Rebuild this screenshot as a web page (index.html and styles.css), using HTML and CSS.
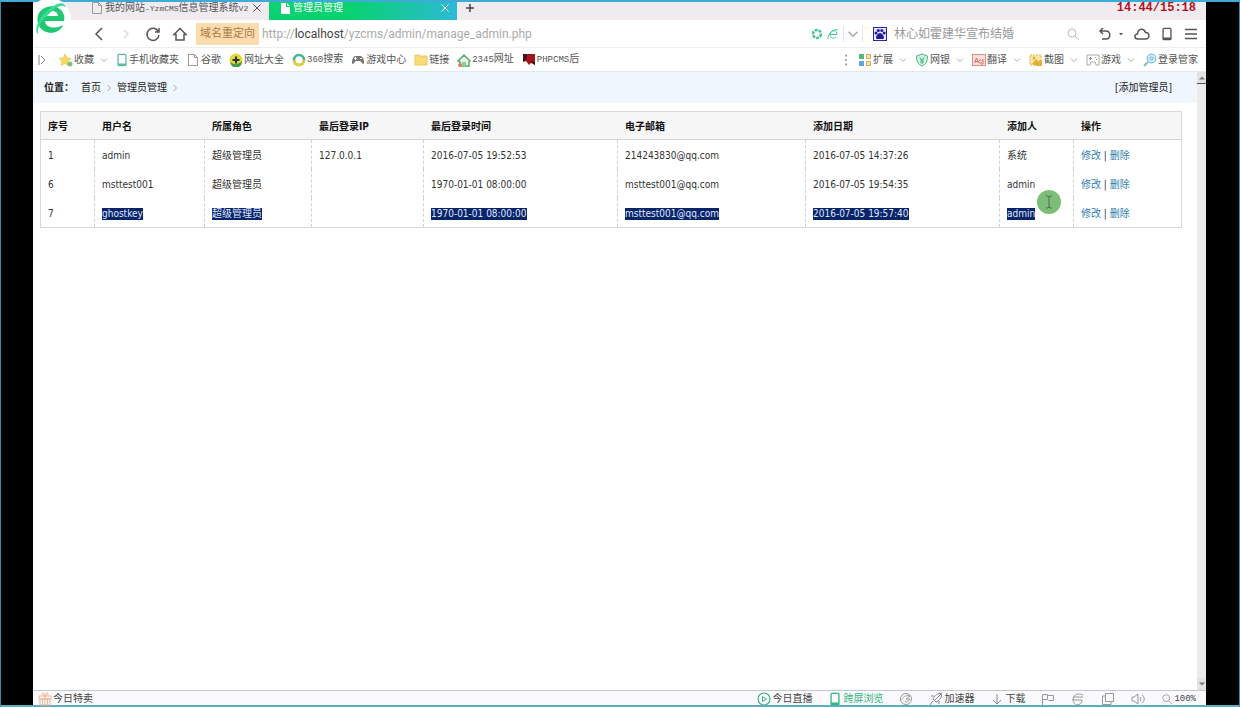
FILE: index.html
```html
<!DOCTYPE html>
<html lang="zh-CN">
<head>
<meta charset="utf-8">
<title>管理员管理</title>
<link rel="stylesheet" href="styles.css">
</head>
<body>
<svg class="sprite" aria-hidden="true">
  <symbol id="page" viewBox="0 0 12 14"><path d="M1.5 1.5h6l3 3v8h-9zM7.5 1.5v3h3" fill="none" stroke="currentColor"/></symbol>
  <symbol id="down" viewBox="0 0 8 8"><path d="M1 2.5l3 3 3-3" fill="none" stroke="currentColor"/></symbol>
  <symbol id="next" viewBox="0 0 8 8"><path d="M2.5 1l3 3-3 3" fill="none" stroke="currentColor"/></symbol>
  <symbol id="close" viewBox="0 0 10 10"><path d="M1.5 1.5l7 7M8.5 1.5l-7 7" fill="none" stroke="currentColor"/></symbol>
  <symbol id="search" viewBox="0 0 14 14"><circle cx="6" cy="6" r="4" fill="none" stroke="currentColor"/><path d="M9 9l4 4" stroke="currentColor"/></symbol>
  <symbol id="phone" viewBox="0 0 12 16"><rect x="1.5" y="1.5" width="9" height="13" rx="1" fill="none" stroke="currentColor" stroke-width="1.5"/><path d="M1.5 12h9v2h-9z" fill="currentColor"/></symbol>
</svg>

<div class="window">
  <header class="chrome">
    <svg class="logo" viewBox="0 0 38 46" aria-label="浏览器">
      <circle cx="17" cy="23" r="21" fill="#fff"/>
      <path d="M31 25H12c0 6 9 9 18 4-2 7-12 10-19 6C4 31 3 22 6 17 11 9 23 8 28 14c3 3 4 7 3 11zM12 20h13c0-6-11-7-13 0z" fill="#20c873" fill-rule="evenodd"/>
      <path d="M5 38C1 36 4 23 16 13 23 7 32 4 33 12c-3-5-10-1-17 6C8 25 4 31 5 38z" fill="#35dc91"/>
    </svg>

    <nav class="tabs">
      <button class="tab"><svg class="i12 gray"><use href="#page"/></svg><span class="tab-title">我的网站<span class="mono small">-YzmCMS</span>信息管理系统<span class="mono small">V2</span></span><svg class="i10"><use href="#close"/></svg></button>
      <button class="tab active"><svg class="i12" viewBox="0 0 12 14"><path d="M2 2h5v4h4v7H2z" fill="#fff"/><path d="M8 2l3 3H8z" fill="#fff"/></svg><span class="tab-title">管理员管理</span><svg class="i10"><use href="#close"/></svg></button>
      <button class="add" aria-label="新标签"><svg class="i10" viewBox="0 0 10 10"><path d="M5 1v8M1 5h8" stroke="#444" stroke-width="1.5"/></svg></button>
      <time class="clock">14:44/15:18</time>
    </nav>

    <div class="address">
      <div class="nav-buttons">
        <button aria-label="后退"><svg class="i16" viewBox="0 0 16 16"><path d="M11 2L5 8l6 6" fill="none" stroke="#555" stroke-width="1.5"/></svg></button>
        <button aria-label="前进"><svg class="i16" viewBox="0 0 16 16"><path d="M6 4l4 4-4 4" fill="none" stroke="#ddd" stroke-width="1.5"/></svg></button>
        <button aria-label="刷新"><svg class="i16" viewBox="0 0 16 16"><path d="M13 5A6 6 0 1 0 14 9M14 2v4h-4" fill="none" stroke="#555" stroke-width="1.5"/></svg></button>
        <button aria-label="主页"><svg class="i16" viewBox="0 0 16 16"><path d="M2 8.500L8 2.500l6 6H12V14H4V8.500z" fill="none" stroke="#555" stroke-width="1.500"/></svg></button>
      </div>
      <span class="redirect">域名重定向</span>
      <div class="url" role="textbox" contenteditable="true" spellcheck="false" aria-label="网址">http://<b>localhost</b>/yzcms/admin/manage_admin.php</div>
      <div class="modes">
        <svg class="i12" viewBox="0 0 12 12"><circle cx="6" cy="6" r="4" fill="none" stroke="#45c78d" stroke-width="2.500" stroke-dasharray="3 1"/></svg>
        <svg class="i12" viewBox="0 0 12 12"><path d="M3 6.500h7C10 1 3 2 3 7c0 3 4 4 6 2M1 11C0 6 7 0 11 2" fill="none" stroke="#45c78d"/></svg>
        <button class="split" aria-label="模式"><svg class="i12"><use href="#down"/></svg></button>
      </div>
      <form class="search">
        <svg class="i14" viewBox="0 0 14 14"><path d="M0 0h14v14H0z" fill="#2529a6"/><path d="M1 1h12v12H1z" fill="#e8e8fa"/><path d="M7 6c2 0 4 3 4 4.500 0 2-2 1.500-4 1.500s-4 .500-4-1.500C3 9 5 6 7 6z" fill="#2018a0"/><circle cx="3" cy="6" r="1.500" fill="#2018a0"/><circle cx="5.300" cy="3.500" r="1.500" fill="#2018a0"/><circle cx="8.800" cy="3.500" r="1.500" fill="#2018a0"/><circle cx="11.200" cy="6" r="1.500" fill="#2018a0"/></svg>
        <input type="text" aria-label="搜索" placeholder="林心如霍建华宣布结婚">
        <button aria-label="搜索"><svg class="i14"><use href="#search"/></svg></button>
      </form>
      <div class="tools">
        <button aria-label="恢复"><svg class="i14" viewBox="0 0 14 14"><path d="M5 1L2 4l3 3M2 4h6c5 0 5 8 0 8H4" fill="none" stroke="#555" stroke-width="1.500"/></svg></button>
        <button aria-label="更多"><svg class="i6" viewBox="0 0 6 6"><path d="M1 2h4L3 4.500z" fill="#555"/></svg></button>
        <button aria-label="云"><svg class="i16" viewBox="0 0 16 14"><path d="M4 12C0 12 0 7 3.500 7 4 1 10 1 11.500 5.500 16 5 16 12 12 12z" fill="none" stroke="#555" stroke-width="1.500"/></svg></button>
        <button class="dark" aria-label="手机"><svg class="i14"><use href="#phone"/></svg></button>
        <button aria-label="菜单"><svg class="i14" viewBox="0 0 14 14"><path d="M1 2.500h12M1 7h12M1 11.500h12" stroke="#555" stroke-width="1.500"/></svg></button>
      </div>
    </div>

    <div class="bookmarks">
      <button class="lead" aria-label="展开"><svg class="i10" viewBox="0 0 10 12"><path d="M2 1v10M4 2l4 4-4 4" fill="none" stroke="#888"/></svg></button>
      <button class="mark"><svg class="i14" viewBox="0 0 14 14"><path d="M6 1l2 4 4 .500-3 3 .500 4L6 10.500l-4 2 1-4-3-3L4.500 5z" fill="#f7da64" stroke="#e0b83c" stroke-width=".600"/><circle cx="11" cy="11" r="2.500" fill="#7cc47c"/></svg>收藏<svg class="i8 chev"><use href="#down"/></svg></button>
      <a class="mark" href="#"><svg class="i12 mint"><use href="#phone"/></svg>手机收藏夹</a>
      <a class="mark" href="#"><svg class="i12 gray"><use href="#page"/></svg><span class="after-page">谷歌</span></a>
      <a class="mark" href="#"><svg class="i14" viewBox="0 0 14 14"><circle cx="7" cy="7" r="6.500" fill="#e6d832"/><path d="M1 9a6 6 0 0 0 12-1C9 12 5 12 1 9z" fill="#3c9a45"/><path d="M7 3.500v7M3.500 7h7" stroke="#234" stroke-width="2"/></svg>网址大全</a>
      <a class="mark" href="#"><svg class="i14" viewBox="0 0 14 14"><circle cx="7" cy="7" r="5" fill="none" stroke="#43b58c" stroke-width="2.500"/><path d="M2 7a5 5 0 0 0 10 0" fill="none" stroke="#e7c936" stroke-width="2.500"/></svg><span><span class="mono">360</span>搜索</span></a>
      <a class="mark" href="#"><svg class="i14" viewBox="0 0 14 14"><path d="M4 3h6c3 1 4 8 2 8-1 0-2-3-3-3H5c-1 0-2 3-3 3-2 0-1-7 2-8z" fill="#777"/><path d="M4.500 4v3M3 5.500h3M9 5.500h2" stroke="#fff"/></svg>游戏中心</a>
      <a class="mark" href="#"><svg class="i14" viewBox="0 0 14 14"><path d="M1 2h4l1 1h7v9H1z" fill="#f7dc7b" stroke="#e8c85a"/></svg>链接</a>
      <a class="mark" href="#"><svg class="i14" viewBox="0 0 14 14"><path d="M1 8l6-6 6 6-1 1v4H3V9z" fill="#e8f5e6" stroke="#52ac66" stroke-width="1.500"/><path d="M5 9h4v4H5z" fill="#8fcb95"/><circle cx="3" cy="12" r="2" fill="#dd7d62"/></svg><span><span class="mono">2345</span>网址</span></a>
      <a class="mark" href="#"><svg class="i14" viewBox="0 0 14 14"><path d="M1 1h12v11L9 10l-2 2-3-4-3 1z" fill="#a3141c"/><path d="M1 1h4v4l-2 3H1zM8 8l5 1v3z" fill="#451116"/></svg><span><span class="mono">PHPCMS</span>后</span></a>
      <div class="extensions">
        <svg class="i8" viewBox="0 0 8 14"><path d="M3 1h2v2H3zM3 6h2v2H3zM3 11h2v2H3z" fill="#888"/></svg>
        <button class="mark"><svg class="i14" viewBox="0 0 14 14"><path d="M1 1h5v5H1z" fill="#55b77d"/><path d="M1 8h5v5H1z" fill="#5ca5dd"/><path d="M8.500 1.500h4v4h-4zM8.500 8.500h4v4h-4z" fill="#fbe3b5" stroke="#dda64e"/></svg>扩展<svg class="i8 chev"><use href="#down"/></svg></button>
        <button class="mark"><svg class="i14" viewBox="0 0 14 14"><path d="M7 1l5.500 2c0 5-1 8-5.500 10C2.500 11 1.500 8 1.500 3z" fill="#d4f4e3" stroke="#48b788"/><path d="M4.500 4L7 7l2.500-3M7 7v4M5 7h4M5 9h4" stroke="#48b788" fill="none"/></svg>网银<svg class="i8 chev"><use href="#down"/></svg></button>
        <button class="mark"><svg class="i14" viewBox="0 0 14 14"><rect x=".500" y="1.500" width="13" height="11" fill="#fce0dc" stroke="#e08e89"/><path d="M2.500 10L4.500 5l2 5M3 8.500h3M9.500 7.500a1.500 1.500 0 1 0 0 2M11 6v5H9" fill="none" stroke="#d96f69"/></svg>翻译<svg class="i8 chev"><use href="#down"/></svg></button>
        <button class="mark"><svg class="i14" viewBox="0 0 14 14"><path d="M1 2h11v10H1z" fill="#fae7a6" stroke="#dfb64d" stroke-dasharray="2 1"/><circle cx="5" cy="5" r="1.500" fill="#e1b03d"/><path d="M3 11l4-5 2 2 4-1v6H8z" fill="#e1b03d"/></svg>截图<svg class="i8 chev"><use href="#down"/></svg></button>
        <button class="mark"><svg class="i14" viewBox="0 0 14 14"><path d="M1 2h12v10h-3L9 9H5l-1 3H1z" fill="none" stroke="#aaa"/><path d="M4.500 4v3M3 5.500h3M9 4.500h1M10 6.500h1" stroke="#999"/></svg>游戏<svg class="i8 chev"><use href="#down"/></svg></button>
        <button class="mark"><svg class="i14" viewBox="0 0 14 14"><circle cx="8.500" cy="5.500" r="4.500" fill="#d1edfa" stroke="#68b4d7"/><circle cx="8.500" cy="5.500" r="1.500" fill="none" stroke="#68b4d7"/><path d="M5 9l-4 4" stroke="#88b8cc" stroke-width="2"/></svg>登录管家</button>
      </div>
    </div>
  </header>

  <div class="viewport">
    <main class="page">
      <div class="location">
        <strong>位置：</strong>
        <a href="#">首页</a><svg class="i8"><use href="#next"/></svg>
        <a href="#">管理员管理</a><svg class="i8"><use href="#next"/></svg>
        <a class="create" href="#">[添加管理员]</a>
      </div>
      <div class="content">
        <table class="admins">
          <colgroup><col class="c-id"><col class="c-user"><col class="c-role"><col class="c-ip"><col class="c-login"><col class="c-mail"><col class="c-date"><col class="c-by"><col class="c-act"></colgroup>
          <thead><tr><th>序号</th><th>用户名</th><th>所属角色</th><th>最后登录IP</th><th>最后登录时间</th><th>电子邮箱</th><th>添加日期</th><th>添加人</th><th>操作</th></tr></thead>
          <tbody>
            <tr><td>1</td><td>admin</td><td>超级管理员</td><td>127.0.0.1</td><td>2016-07-05 19:52:53</td><td>214243830@qq.com</td><td>2016-07-05 14:37:26</td><td>系统</td><td><a href="#">修改</a> | <a href="#">删除</a></td></tr>
            <tr><td>6</td><td>msttest001</td><td>超级管理员</td><td></td><td>1970-01-01 08:00:00</td><td>msttest001@qq.com</td><td>2016-07-05 19:54:35</td><td>admin</td><td><a href="#">修改</a> | <a href="#">删除</a></td></tr>
            <tr><td>7</td><td><span class="sel">ghostkey</span></td><td><span class="sel">超级管理员</span></td><td></td><td><span class="sel">1970-01-01 08:00:00</span></td><td><span class="sel">msttest001@qq.com</span></td><td><span class="sel">2016-07-05 19:57:40</span></td><td class="pointed"><span class="sel">admin</span><svg class="pointer" viewBox="0 0 24 24"><circle cx="12" cy="12" r="12" fill="#7cbd78"/><path d="M9 6h2l1 1 1-1h2M9 18h2l1-1 1 1h2M12 7v10" fill="none" stroke="#4d6f50"/></svg></td><td><a href="#">修改</a> | <a href="#">删除</a></td></tr>
          </tbody>
        </table>
      </div>
    </main>
    <div class="scrollbar">
      <button aria-label="向上"><svg class="i8" viewBox="0 0 8 8"><path d="M1 5.500h6L4 2.500z" fill="#777"/></svg></button>
      <button aria-label="向下"><svg class="i8" viewBox="0 0 8 8"><path d="M1 2.500h6L4 5.500z" fill="#777"/></svg></button>
    </div>
  </div>

  <footer class="status">
    <button class="deal"><svg class="i14" viewBox="0 0 14 14"><path d="M1 4h12v3H1zM2 7h10v6H2zM7 4v9M4.500 7v6M9.500 7v6M7 4C4 4 3 1 5 1s2 3 2 3 0-3 2-3 1 3-2 3" fill="none" stroke="#efb595"/></svg>今日特卖</button>
    <button><svg class="i14" viewBox="0 0 14 14"><circle cx="7" cy="7" r="6" fill="none" stroke="#42b583" stroke-width="1.200"/><path d="M5.500 4.500v5l4-2.500z" fill="none" stroke="#42b583"/></svg>今日直播</button>
    <button class="green"><svg class="i14"><use href="#phone"/></svg>跨屏浏览</button>
    <button aria-label="清理"><svg class="i14" viewBox="0 0 14 14"><circle cx="7" cy="7" r="5.500" fill="none" stroke="#999"/><path d="M3 7c2-3 5-4 8-3L7 7h4c-1 2-3 3-5 3" fill="none" stroke="#999"/></svg></button>
    <button><svg class="i14" viewBox="0 0 14 14"><path d="M12.500 1.500L5 9M12.500 1.500C9 1 6 3 4 7l3 3c4-2 6-5 5.500-8.500zM5 4H2M10 9v3M4 9l-3 4" fill="none" stroke="#888"/></svg>加速器</button>
    <button><svg class="i14" viewBox="0 0 14 14"><path d="M7 2v10M3 8l4 4 4-4" fill="none" stroke="#888"/></svg>下载</button>
    <button aria-label="旗帜"><svg class="i14" viewBox="0 0 14 14"><path d="M1.500 13V2.500h5v5h-5M6.500 3.500h6v5h-5" fill="none" stroke="#999"/></svg></button>
    <button aria-label="浏览模式"><svg class="i14" viewBox="0 0 14 14"><path d="M2 5h10M2 7c0 8 9 7 9 1H2c0-6 6-7 10-5" fill="none" stroke="#999"/></svg></button>
    <button aria-label="窗口"><svg class="i14" viewBox="0 0 14 14"><path d="M4.500 1.500h8v8h-8zM4.500 4h-3v8.500H10v-3" fill="none" stroke="#999"/></svg></button>
    <button aria-label="声音"><svg class="i14" viewBox="0 0 14 14"><path d="M1 5h2l4-3v10L3 9H1zM9 5c1 1 1 3 0 4M11 3c3 2 3 6 0 8" fill="none" stroke="#999"/></svg></button>
    <button class="gray"><svg class="i12"><use href="#search"/></svg><span class="ink mono">100%</span></button>
  </footer>
</div>
</body>
</html>
```
FILE: styles.css
```css
* { box-sizing: border-box; }

body {
  margin: 0;
  background: #000;
  color: #333;
  font: 10px/14px "DejaVu Sans Condensed", "Noto Sans", "Noto Sans CJK SC", sans-serif;
}

button, input { font: inherit; color: inherit; }
button { display: flex; align-items: center; padding: 0; border: 0; background: none; }
a { color: inherit; text-decoration: none; }
svg { flex: none; display: block; }

.sprite { position: absolute; width: 0; height: 0; }
.i6 { width: 6px; height: 6px; }
.i8 { width: 8px; height: 12px; }
.i10 { width: 10px; height: 12px; }
.i12 { width: 12px; height: 14px; }
.i14 { width: 14px; height: 14px; }
.i16 { width: 16px; height: 16px; }
.gray { color: #999; }
.ink { color: #444; }
.mint { color: #62b9a4; }
.dark { color: #555; }
.mono { font-family: "Liberation Mono", monospace; font-size: 9px; }
.mono.small { font-size: 8px; }

.window {
  display: flex;
  flex-direction: column;
  min-height: 100vh;
  padding: 0 33px 0 32px;
  border: 1px solid #3b87a8;
  border-top: 2px solid #3faad8;
  border-bottom: 2px solid #58afc6;
}

.chrome { position: relative; background: #fff; }
.logo { position: absolute; left: 0; top: -6px; width: 38px; height: 46px; }

.tabs { display: flex; height: 18px; padding-left: 48px; background: #f0ebef; overflow: hidden; }
.tab {
  flex: 0 1 188px;
  gap: 2px;
  min-width: 0;
  height: 18px;
  padding: 0 7px 6px 10px;
  color: #555;
}
.tab-title { flex: 1; overflow: hidden; text-align: left; white-space: nowrap; }
.tab.active { background: linear-gradient(100deg, #0ad272 45%, #2cb9d8); color: #fff; }
.add { padding: 0 8px 6px; }
.clock {
  margin-left: auto;
  padding-right: 10px;
  color: #b5121b;
  font: bold 12px/12px "Liberation Mono", monospace;
}

.address { display: flex; align-items: center; height: 28px; padding: 1px 8px 0 58px; border-bottom: 1px solid #eee; }
.nav-buttons { display: flex; gap: 11px; padding-right: 8px; }
.redirect { padding: 4px; background: #fbdcae; color: #a87a42; font-size: 11px; white-space: nowrap; }
.url { flex: 1; padding-left: 3px; color: #aaa; font: 12px/16px Roboto, sans-serif; white-space: nowrap; outline: 0; }
.url b { color: #444; font-weight: 400; }
.modes { display: flex; align-items: center; gap: 4px; padding-right: 10px; }
.split { padding: 1px 3px; border: solid #e5e5e5; border-width: 0 1px; color: #aaa; }
.search { display: flex; align-items: center; width: 209px; margin-right: 16px; padding-right: 2px; }
.search input { flex: 1; min-width: 0; padding: 0 7px; border: 0; outline: 0; background: none; font-size: 12px; line-height: 16px; }
.search input::placeholder { color: #999; opacity: 1; }
.search button { color: #bbb; }
.tools { display: flex; align-items: center; gap: 10px; }
.tools button:first-child { margin-right: -4px; }

.bookmarks { display: flex; align-items: center; gap: 8px; height: 24px; padding: 0 8px 0 4px; border-bottom: 1px solid #e4e8ee; color: #555; }
.lead { margin-right: 4px; }
.mark { display: flex; align-items: center; gap: 1px; white-space: nowrap; }
.after-page { padding-left: 1px; }
.chev { margin-left: 5px; color: #aaa; }
.extensions { display: flex; align-items: center; gap: 8px; margin-left: auto; }

.viewport { flex: 1; display: flex; background: #fff; }
.page { flex: 1; min-width: 0; }
.location { display: flex; align-items: center; gap: 4px; height: 31px; padding: 0 25px 0 11px; background: #eff6fd; color: #222; }
.location strong { margin-right: 3px; }
.location svg { color: #aaa; }
.location .create { margin-left: auto; }
.content { padding: 8px 15px 8px 7px; }

.admins { width: 100%; table-layout: fixed; border: 1px solid #d5d9d9; border-collapse: separate; border-spacing: 0; }
.admins th, .admins td { padding: 2px 7px 0; text-align: left; white-space: nowrap; }
.admins th { height: 28px; background: #f6f6f6; border-bottom: 1px solid #cfd3d3; color: #111; font-weight: 700; }
.admins td { height: 29px; border-right: 1px dashed #ccd2d8; }
.admins td:last-child { border-right: 0; }
.admins td a { color: #2f7fae; }
.c-id { width: 54px; }
.c-user { width: 110px; }
.c-role { width: 107px; }
.c-ip { width: 112px; }
.c-login { width: 194px; }
.c-mail { width: 188px; }
.c-date { width: 194px; }
.c-by { width: 74px; }
.c-act { width: 107px; }
.sel { display: inline-block; height: 12px; line-height: 12px; background: #0a246a; color: #dfe8ff; }
.pointed { position: relative; }
.pointer { position: absolute; right: 12px; top: -8px; width: 24px; height: 24px; }

.scrollbar { display: flex; flex-direction: column; justify-content: space-between; width: 9px; background: #ececec; }
.scrollbar button { justify-content: center; height: 12px; background: #e2e2e2; }
.scrollbar button:first-child { border-bottom: 1px solid #555; }

.status { display: flex; align-items: center; gap: 16px; height: 15px; padding: 2px 10px 0 5px; border-top: 1px solid #c4c8cc; background: #fafafc; color: #444; }
.status button { gap: 1px; white-space: nowrap; }
.status .green { color: #35b57e; }
.status .deal { margin-right: auto; }
```
